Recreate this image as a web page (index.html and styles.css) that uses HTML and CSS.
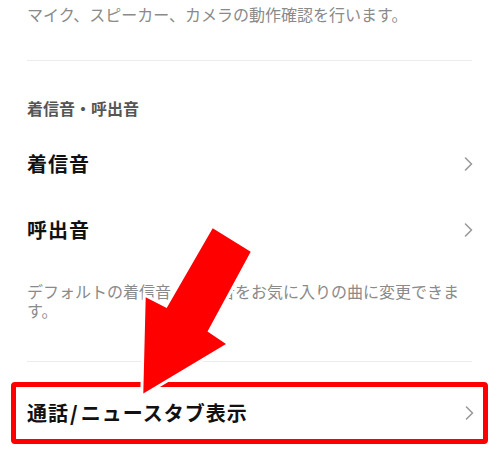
FILE: index.html
```html
<!DOCTYPE html>
<html lang="ja">
<head>
<meta charset="utf-8">
<title>通話設定</title>
<link rel="stylesheet" href="styles.css">
</head>
<body>
<div class="page">
  <p class="desc desc-top">マイク、スピーカー、カメラの動作確認を行います。</p>
  <div class="divider divider-1"></div>
  <h2 class="section-title">着信音・呼出音</h2>
  <div class="row row-first">
    <span class="row-label">着信音</span>
    <svg class="chev" width="9" height="14" viewBox="0 0 9 14"><polyline points="1.5,1 7.5,7 1.5,13" fill="none" stroke="#9a9a9a" stroke-width="1.6" stroke-linecap="round" stroke-linejoin="round"/></svg>
  </div>
  <div class="row">
    <span class="row-label">呼出音</span>
    <svg class="chev" width="9" height="14" viewBox="0 0 9 14"><polyline points="1.5,1 7.5,7 1.5,13" fill="none" stroke="#9a9a9a" stroke-width="1.6" stroke-linecap="round" stroke-linejoin="round"/></svg>
  </div>
  <p class="desc desc-sound">デフォルトの着信音・呼出音をお気に入りの曲に変更できます。</p>
  <div class="divider divider-2"></div>
  <div class="row row-boxed">
    <span class="row-label">通話<span class="slash">/</span>ニュースタブ表示</span>
    <svg class="chev" width="9" height="14" viewBox="0 0 9 14"><polyline points="1.5,1 7.5,7 1.5,13" fill="none" stroke="#9a9a9a" stroke-width="1.6" stroke-linecap="round" stroke-linejoin="round"/></svg>
  </div>
  <svg class="arrow" width="500" height="472" viewBox="0 0 500 472">
    <polygon points="212.7,228.3 250.7,251.7 207.5,331.5 226,344 143.3,393.5 145.7,297.3 166.7,308" fill="#ff0000" stroke="#ffffff" stroke-width="6" stroke-linejoin="miter" paint-order="stroke"/>
  </svg>
</div>
</body>
</html>
```

FILE: styles.css
```css
html, body {
  margin: 0;
  padding: 0;
  background: #ffffff;
}

body {
  font-family: "Noto Sans CJK JP", "Noto Sans", sans-serif;
  color: #111111;
}

.page {
  position: relative;
  width: 500px;
  height: 472px;
  overflow: hidden;
  display: flex;
  flex-direction: column;
}

.desc {
  margin: 0 28px 0 27px;
  font-size: 16px;
  line-height: 19px;
  color: #8a8a8a;
}

.desc-top {
  padding-top: 4px;
  line-height: 20px;
}

.divider {
  height: 1px;
  background: #ececec;
  margin: 0 28px 0 27px;
}

.divider-1 {
  margin-top: 36px;
}

.section-title {
  margin: 37px 28px 0 27px;
  font-size: 16px;
  line-height: 20px;
  font-weight: 700;
  color: #555555;
}

.row {
  height: 66px;
  margin: 0 28px 0 27px;
  display: flex;
  align-items: center;
  justify-content: space-between;
}

.row-first {
  margin-top: 13px;
}

.row-label {
  font-size: 20px;
  line-height: 24px;
  font-weight: 700;
  letter-spacing: 1px;
  color: #111111;
}

.slash {
  display: inline-block;
  margin: 0 3px 0 1px;
  letter-spacing: 0;
  font-weight: 800;
}

.chev {
  display: block;
  margin-right: -1px;
}

.desc-sound {
  margin-top: 19px;
}

.divider-2 {
  margin-top: 41px;
}

.row-boxed {
  height: 52px;
  margin: 20px 12px 0 11px;
  padding: 0 10px 0 11px;
  border: 5px solid #ff0000;
  border-radius: 4px;
}

.arrow {
  position: absolute;
  top: 0;
  left: 0;
  pointer-events: none;
}
```
